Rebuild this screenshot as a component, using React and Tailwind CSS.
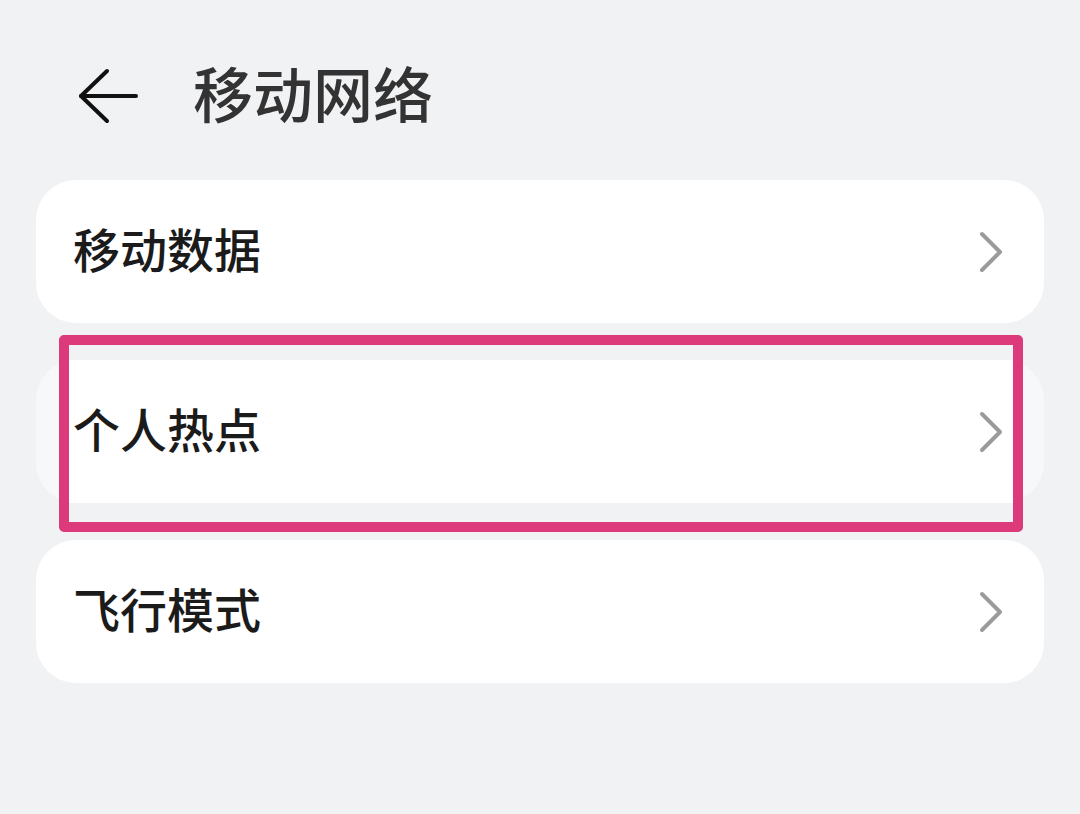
const FONT = { fontFamily: '"Noto Sans CJK SC", "Noto Sans", sans-serif' };

function BackArrow() {
  return (
    <svg width="60" height="56" viewBox="0 0 60 56" fill="none" stroke="#111" strokeWidth="4" strokeLinecap="round" strokeLinejoin="round">
      <path d="M3 28 H58" />
      <path d="M29 3 L3 28 L29 53" />
    </svg>
  );
}

function Chevron() {
  return (
    <svg width="24" height="42" viewBox="0 0 24 42" fill="none" stroke="#9b9b9b" strokeWidth="4" strokeLinecap="round" strokeLinejoin="round">
      <path d="M3 3 L21 21 L3 39" />
    </svg>
  );
}

function RowContent({ label }) {
  return (
    <div className="relative z-10 flex h-full items-center justify-between pl-[37px] pr-[41px]">
      <span className="pb-[8px] text-[47px] font-medium leading-none text-[#1b1b1b]">{label}</span>
      <Chevron />
    </div>
  );
}

function Card({ label }) {
  return (
    <div className="h-[143px] rounded-[40px] bg-white">
      <RowContent label={label} />
    </div>
  );
}

// second row: faint card with the pink highlight box pasted over it
function HighlightedCard({ label }) {
  return (
    <div className="relative h-[143px]">
      <div className="absolute inset-0 rounded-[40px] bg-[#f7f8f9]" />
      <div className="absolute top-[-25px] bottom-[-29px] left-[23px] right-[21px] flex flex-col rounded-[5px] border-[10px] border-[#dc3a7a] bg-[#f1f2f4]">
        <div className="h-[15px]" />
        <div className="h-[143px] bg-white" />
      </div>
      <RowContent label={label} />
    </div>
  );
}

export default function App() {
  return (
    <div className="h-[814px] w-[1080px] overflow-hidden bg-[#f1f2f4]" style={FONT}>
      <header className="h-[180px]">
        <div className="flex h-[64px] translate-y-[64px] items-center pl-[78px]">
          <BackArrow />
          <h1 className="ml-[55px] pb-[8px] text-[60px] font-medium leading-[64px] text-[#333333]">移动网络</h1>
        </div>
      </header>
      <main className="flex flex-col gap-[37px] px-[36px]">
        <Card label="移动数据" />
        <HighlightedCard label="个人热点" />
        <Card label="飞行模式" />
      </main>
    </div>
  );
}
